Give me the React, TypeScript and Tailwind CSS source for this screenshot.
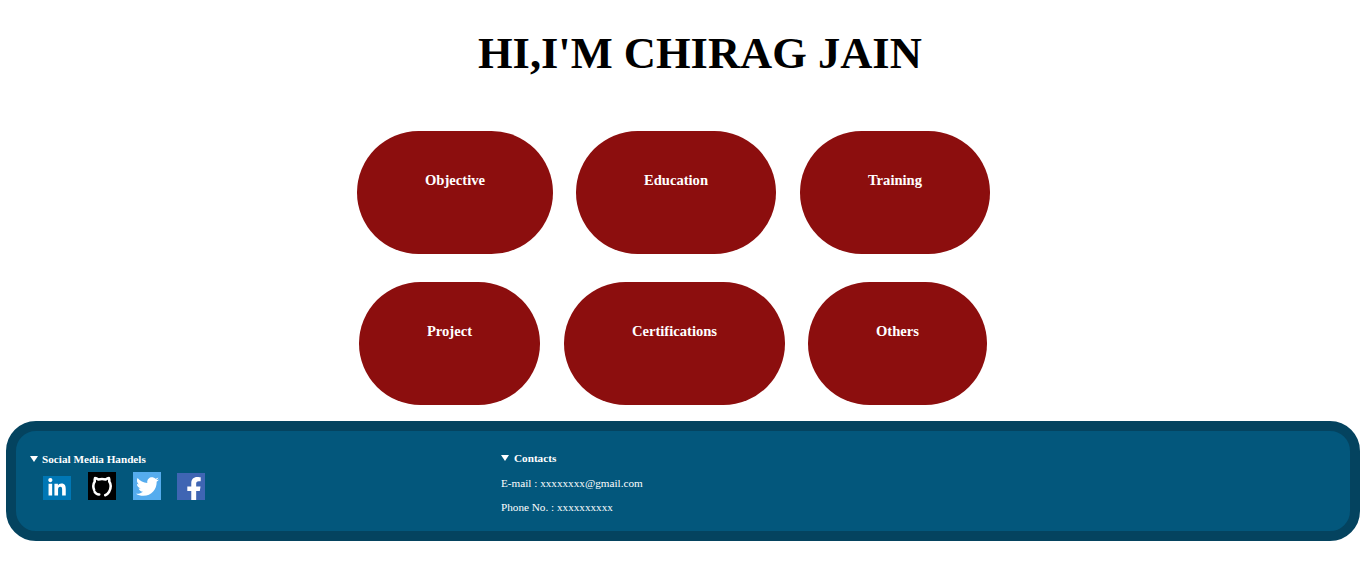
import { FaTwitter, FaLinkedinIn, FaFacebookF } from 'react-icons/fa'

function Pill({ label, className }: { label: string; className: string }) {
  return (
    <div className={`h-[123px] shrink-0 rounded-full bg-[#8c0e0e] pt-[41px] text-center text-[14.6px] leading-[17px] font-bold text-white ${className}`}>
      {label}
    </div>
  )
}

function Arrow() {
  return <span className="mr-[4px] inline-block h-0 w-0 border-x-[4px] border-t-[6px] border-x-transparent border-t-white align-[1px]" />
}

export default function App() {
  return (
    <div className="min-h-[580px] bg-white font-['Liberation_Serif',serif]">
      <h1 className="pt-[26px] pl-[478px] text-[44.5px] leading-[55px] font-bold text-black">HI,I'M CHIRAG JAIN</h1>

      <div className="mt-[50px] flex gap-[23px] pl-[357px]">
        <Pill label="Objective" className="w-[196px]" />
        <Pill label="Education" className="w-[200px]" />
        <Pill label="Training" className="ml-px w-[190px]" />
      </div>
      <div className="mt-[28px] flex gap-[23px] pl-[359px]">
        <Pill label="Project" className="w-[181px]" />
        <Pill label="Certifications" className="ml-px w-[221px]" />
        <Pill label="Others" className="w-[179px]" />
      </div>

      <footer className="mx-[6px] mt-[16px] flex h-[120px] rounded-[30px] border-[10px] border-[#04435f] bg-[#03577c] text-[11.2px] leading-[13px] text-white">
        <div className="w-[485px] pt-[22px] pl-[14px]">
          <div className="font-bold"><Arrow />Social Media Handels</div>
          <div className="mt-[6px] flex items-end pl-[13px]">
            <div className="flex h-[24px] w-[28px] items-center justify-center bg-[#0077b5] text-[20px] text-white"><FaLinkedinIn /></div>
            <div className="ml-[17px] flex h-[28px] w-[28px] items-center justify-center bg-black text-white">
              <svg viewBox="0 0 24 24" className="h-[22px] w-[22px]" fill="none" stroke="currentColor" strokeWidth="2.8" strokeLinecap="round" strokeLinejoin="round">
                <path d="M15.5 22c3-1 6-5 6-10 0-2-.6-3.6-1.6-5 .2-1.2.1-2.5-.3-3.6-1.3 0-2.6.7-3.6 1.5-2.6-.7-5.4-.7-8 0-1-.8-2.3-1.5-3.6-1.5-.4 1.1-.5 2.4-.3 3.6-1 1.4-1.6 3-1.6 5 0 1.6.3 3 .9 4.2" />
                <path d="M4 18.5c1.2 2 3 2.8 5 2.7" />
              </svg>
            </div>
            <div className="ml-[17px] flex h-[28px] w-[28px] items-center justify-center bg-[#55acee] text-[23px] text-white"><FaTwitter /></div>
            <div className="ml-[16px] flex h-[27px] w-[28px] items-end justify-center overflow-hidden bg-[#3f65b3] pl-[6px] text-[25px] text-white"><FaFacebookF className="translate-y-[2px]" /></div>
          </div>
        </div>
        <div className="pt-[21px]">
          <div className="font-bold"><Arrow /><span className="ml-px">Contacts</span></div>
          <div className="mt-[12px]">E-mail : xxxxxxxx@gmail.com</div>
          <div className="mt-[11px]">Phone No. : xxxxxxxxxx</div>
        </div>
      </footer>
    </div>
  )
}
